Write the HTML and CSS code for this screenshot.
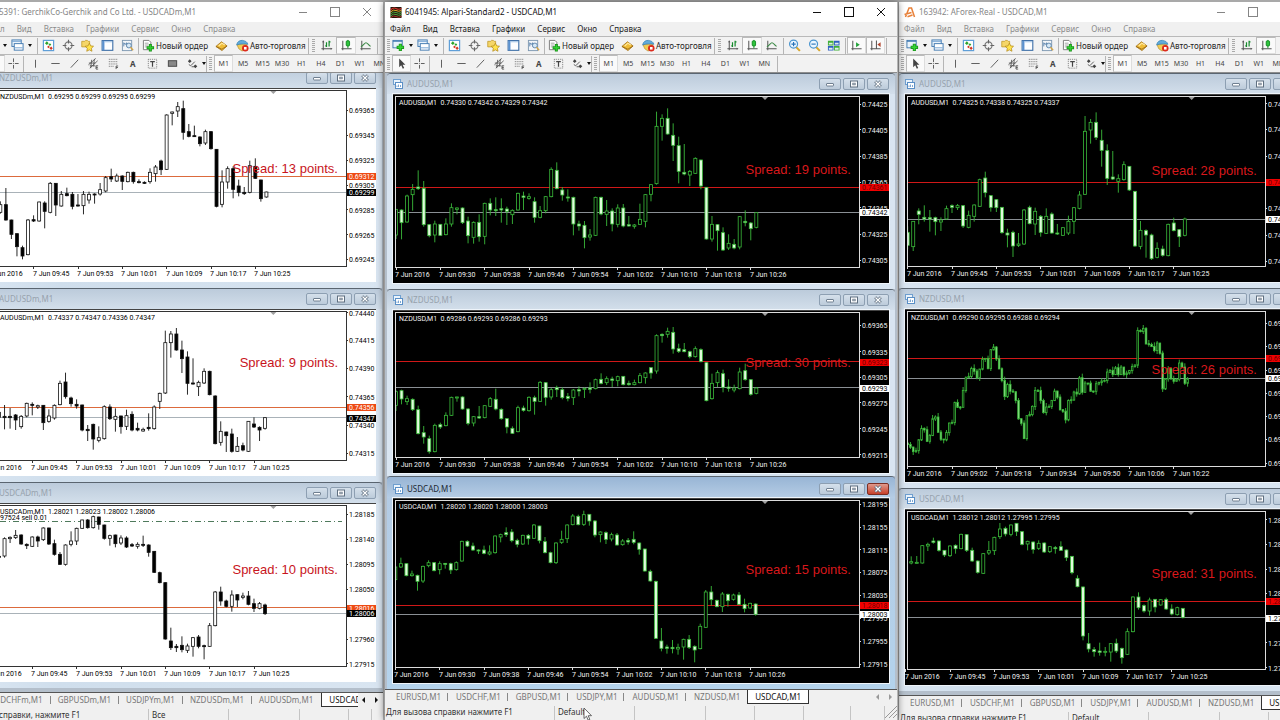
FILE: index.html
```html
<!DOCTYPE html>
<html lang="ru">
<head>
<meta charset="utf-8">
<title>Alpari-Standard2 - USDCAD,M1</title>
<link rel="stylesheet" href="styles.css">
</head>
<body>
<svg class="sprites" aria-hidden="true">
  <symbol id="i-newchart" viewBox="0 0 14 14"><rect x="1" y="1.5" width="10" height="8" fill="#eaf3fb" stroke="#3f78b0"/><path d="M1 2.5h10" stroke="#3f78b0"/><path d="M9 5v8M5 9h8" stroke="#1c9a1c" stroke-width="3.4"/><path d="M9 6v6M6 9h6" stroke="#35d435" stroke-width="1.6"/></symbol>
  <symbol id="i-profiles" viewBox="0 0 14 14"><rect x="1" y="1" width="10" height="7" fill="#eaf3fb" stroke="#3f78b0"/><rect x="3.5" y="5" width="9.500" height="7" fill="#fff" stroke="#3f78b0"/><path d="M1 2.500h10M3.500 9.500h9" stroke="#6fa0d0"/></symbol>
  <symbol id="i-market" viewBox="0 0 14 14"><rect x="1.500" y="1.500" width="11" height="11" fill="#fff" stroke="#5f9fd8" stroke-width="1.300"/><path d="M3.200 4.500l2-2 2 2-2 2zM7 6l1.500-1.500L10 6 8.500 7.500z" fill="#2da52d"/><path d="M5.500 8.500L7 7l1.500 1.500L7 10zM8 10l1.800-1.800L11.600 10l-1.800 1.800z" fill="#d43c28"/></symbol>
  <symbol id="i-cross" viewBox="0 0 14 14"><circle cx="7" cy="7" r="3.800" fill="none" stroke="#777" stroke-width="1.300"/><path d="M7 .800v4M7 9v4.200M.800 7h4M9 7h4.200" stroke="#666" stroke-width="1.200"/></symbol>
  <symbol id="i-favor" viewBox="0 0 14 14"><path d="M.800 2.500h3l1-1h2l1 1h1.500v6h-8.500z" fill="#f5d668" stroke="#bd9526" stroke-width=".800"/><path d="M9 4.500l1.400 2.900 3.100.400-2.300 2.200.600 3.200L9 11.700l-2.800 1.500.600-3.200-2.300-2.200 3.100-.400z" fill="#ffe34d" stroke="#b58a18" stroke-width=".800"/></symbol>
  <symbol id="i-panel" viewBox="0 0 14 14"><rect x="1.200" y="1.700" width="11.500" height="10.500" fill="#fdfeff" stroke="#3f70a8" stroke-width="1.200"/><path d="M2.600 2v10" stroke="#5b92d0" stroke-width="2.200"/><path d="M4 3h8" stroke="#9cc0e4"/></symbol>
  <symbol id="i-tester" viewBox="0 0 14 14"><rect x="1.500" y="1.500" width="10" height="11" fill="#f2f5f8" stroke="#7e98b2"/><path d="M3 8V4l1.500 2L6 4v4" fill="none" stroke="#5a83ad"/><circle cx="8.500" cy="7" r="2.600" fill="#d6e8f6" stroke="#5e86ac"/><path d="M10.300 9l2.700 3" stroke="#d2a446" stroke-width="1.600"/></symbol>
  <symbol id="i-order" viewBox="0 0 14 14"><path d="M1.500 1.500h6l2 2v8h-8z" fill="#fff" stroke="#777"/><path d="M3 4.500h4M3 6.500h4M3 8.500h3" stroke="#888" stroke-width=".800"/><path d="M9 5.500v8M5 9.500h8" stroke="#169016" stroke-width="3.200"/><path d="M9 6.300v6.400M5.800 9.500h6.400" stroke="#32cf32" stroke-width="1.600"/></symbol>
  <symbol id="i-gold" viewBox="0 0 14 14"><path d="M1 8l6-5 6 4.500-5.500 5z" fill="#f0bd38" stroke="#a8761a" stroke-width=".900"/><path d="M1 8l6.400 3L13 7.500" fill="none" stroke="#8d5e10" stroke-width=".800"/><path d="M4 7.500l3.500-3 3 2" stroke="#ffe9a0" stroke-width="1.200" fill="none"/></symbol>
  <symbol id="i-auto" viewBox="0 0 14 14"><path d="M1 6h11l-3 5.500L6.500 13 3 10.500z" fill="#f2cc54" stroke="#b1892b" stroke-width=".700"/><path d="M.700 6.500C1 3 4 1.200 7 1.500s5.500 2 5.800 4.200C9 4.500 5 5 .700 6.500z" fill="#62abd9" stroke="#2f7fb4" stroke-width=".700"/><circle cx="10" cy="10" r="3.500" fill="#dc2a1c"/><rect x="8.600" y="8.600" width="2.800" height="2.800" fill="#fff"/></symbol>
  <symbol id="i-bars" viewBox="0 0 14 14"><path d="M3.500 2v10M1.500 10.500h11" stroke="#555" stroke-width="1.100"/><path d="M2.300 3.500l1.200-2 1.200 2zM11.500 9.300l2 1.200-2 1.200z" fill="#555"/><path d="M7 3.500v5M5.700 7.500H7M9.800 2v6M9.800 3h1.500" stroke="#168a2c" stroke-width="1.300"/></symbol>
  <symbol id="i-candle" viewBox="0 0 14 14"><path d="M3 2v10M1.500 10.500h11" stroke="#555" stroke-width="1.100"/><path d="M8.500 1v9" stroke="#128a22"/><rect x="6.700" y="2" width="3.600" height="5.500" rx="1" fill="#2ec43c" stroke="#128a22"/></symbol>
  <symbol id="i-line" viewBox="0 0 14 14"><path d="M3 2v10M1.500 10.500h11" stroke="#555" stroke-width="1.100"/><path d="M2 8.500C5 7 6 4 7.500 4S10 6.500 12.500 8" fill="none" stroke="#3c8a46" stroke-width="1.100"/></symbol>
  <symbol id="i-zoomin" viewBox="0 0 14 14"><path d="M8.500 8.500l4.300 4.300" stroke="#d6a52c" stroke-width="2.200"/><circle cx="6" cy="5.500" r="4.300" fill="#eaf6ff" stroke="#4a94cf" stroke-width="1.300"/><path d="M6 3.200v4.600M3.700 5.500h4.600" stroke="#2671b8" stroke-width="1.200"/></symbol>
  <symbol id="i-zoomout" viewBox="0 0 14 14"><path d="M8.500 8.500l4.300 4.300" stroke="#d6a52c" stroke-width="2.200"/><circle cx="6" cy="5.500" r="4.300" fill="#eaf6ff" stroke="#4a94cf" stroke-width="1.300"/><path d="M3.700 5.500h4.600" stroke="#2671b8" stroke-width="1.200"/></symbol>
  <symbol id="i-tile" viewBox="0 0 14 14"><path d="M1 2h6v5H1zM7.500 7.500h6v5h-6z" fill="#3fae35"/><path d="M7.500 2h6v5h-6zM1 7.500h6v5H1z" fill="#2c5fc0"/><path d="M2 4h4v2H2zM8.500 4h4v2h-4zM2 9.500h4v2H2zM8.500 9.500h4v2h-4z" fill="#dfeee9"/></symbol>
  <symbol id="i-scroll" viewBox="0 0 14 14"><path d="M3 2v10M1.500 10.500h11" stroke="#555" stroke-width="1.100"/><path d="M6.500 3.500l4 2.700-4 2.700z" fill="#23a33a"/></symbol>
  <symbol id="i-shift" viewBox="0 0 14 14"><path d="M3 2v10M1.500 10.500h11M8 1.500v9" stroke="#555" stroke-width="1.100"/><path d="M12.500 3.500v5L9 6z" fill="#b2452e"/></symbol>
  <symbol id="i-pointer" viewBox="0 0 14 14"><path d="M4.500 1.500v9.500l2.200-2 1.700 3.600 1.500-.700-1.700-3.500h3z" fill="#444"/></symbol>
  <symbol id="i-plus" viewBox="0 0 14 14"><path d="M7 1.500v4M7 8.500v4M1.500 7h4M8.500 7h4M6.600 7h.800" stroke="#555"/></symbol>
  <symbol id="i-vline" viewBox="0 0 14 14"><path d="M7 3v8.500" stroke="#555"/></symbol>
  <symbol id="i-hline" viewBox="0 0 14 14"><path d="M2.500 7h9" stroke="#555"/></symbol>
  <symbol id="i-trend" viewBox="0 0 14 14"><path d="M3 11.500l8-8.500" stroke="#555"/></symbol>
  <symbol id="i-channel" viewBox="0 0 14 14"><path d="M1.500 8.500l8-7M3 12l8.500-8M2 6.500h7M3 9.500h6M5 3l-1 9M8 2L7 10" stroke="#555" stroke-width=".900"/><path d="M12 9.500h-2.300v3.500H12M9.700 11.200h2" fill="none" stroke="#444" stroke-width=".900"/></symbol>
  <symbol id="i-fibo" viewBox="0 0 14 14"><path d="M2 2.500h10M2 5h10M2 7.500h10M2 10h6" stroke="#666" stroke-dasharray="1 1"/><path d="M9.800 13V9.700H12M9.800 11.300h2" fill="none" stroke="#444" stroke-width=".900"/></symbol>
  <symbol id="i-label" viewBox="0 0 14 14"><rect x="2.500" y="2.500" width="9" height="9.500" fill="none" stroke="#777" stroke-dasharray="1 1"/><path d="M4.500 5h5M7 5v5.500" stroke="#444" stroke-width="1.300"/></symbol>
  <symbol id="i-rect" viewBox="0 0 14 14"><rect x="2.500" y="4" width="9" height="6" fill="#888" stroke="#444"/></symbol>
  <symbol id="i-arrows" viewBox="0 0 14 14"><path d="M2 4.500l2-2 2 2-2 2zM8 10l2-2 2.200 2L10 12z" fill="#444"/><path d="M3 8l2 1.500L9.500 5M6 10.500l2.500 0" fill="none" stroke="#555"/></symbol>
  <symbol id="i-doc" viewBox="0 0 10 10"><rect x=".500" y=".500" width="7" height="5" fill="#e9f3fc" stroke="#6f9fcf"/><rect x="2.500" y="3.500" width="7" height="6" fill="#fff" stroke="#5a8fc6"/><path d="M4 8V6.500M5.500 8V5.500M7.500 8V6" stroke="#5a8fc6" stroke-width=".800"/></symbol>
  <symbol id="i-min" viewBox="0 0 12 8"><rect x="2.500" y="3.500" width="7" height="2.500" rx=".500" fill="#fff" stroke="#6f7f90"/></symbol>
  <symbol id="i-max" viewBox="0 0 12 8"><rect x="2.500" y="1" width="7" height="6" fill="#fff" stroke="#5f6f80"/><rect x="4.800" y="3.200" width="2.400" height="1.600" fill="none" stroke="#5f6f80" stroke-width=".800"/></symbol>
  <symbol id="i-close" viewBox="0 0 12 8"><path d="M3.200 1.200l5.600 5.600M8.800 1.200L3.200 6.800" stroke="#5f6f80" stroke-width="2.800"/><path d="M3.500 1.500l5 5M8.500 1.500l-5 5" stroke="#fff" stroke-width="1.200"/></symbol>
</svg>

<template id="bars">
  <nav class="menu">
    <button>Файл</button><button>Вид</button><button>Вставка</button><button>Графики</button><button>Сервис</button><button>Окно</button><button>Справка</button>
  </nav>
  <div class="toolbar">
    <i class="grip"></i>
    <button class="drop" aria-label="Новый график"><svg class="ico"><use href="#i-newchart"/></svg></button>
    <button class="drop" aria-label="Профили"><svg class="ico"><use href="#i-profiles"/></svg></button>
    <i class="sep"></i>
    <div class="group group-views">
      <button aria-label="Обзор рынка"><svg class="ico"><use href="#i-market"/></svg></button>
      <button aria-label="Окно данных"><svg class="ico"><use href="#i-cross"/></svg></button>
      <button aria-label="Навигатор"><svg class="ico"><use href="#i-favor"/></svg></button>
      <button aria-label="Терминал"><svg class="ico"><use href="#i-panel"/></svg></button>
      <button aria-label="Тестер"><svg class="ico"><use href="#i-tester"/></svg></button>
    </div>
    <i class="sep"></i>
    <button class="wide"><svg class="ico"><use href="#i-order"/></svg>Новый ордер</button>
    <button class="gold" aria-label="Редактор"><svg class="ico"><use href="#i-gold"/></svg></button>
    <button class="wide"><svg class="ico"><use href="#i-auto"/></svg>Авто-торговля</button>
    <i class="sep"></i><i class="grip"></i>
    <div class="group group-kind">
      <button aria-label="Бары"><svg class="ico"><use href="#i-bars"/></svg></button>
      <button class="on" aria-label="Свечи"><svg class="ico"><use href="#i-candle"/></svg></button>
      <button aria-label="Линия"><svg class="ico"><use href="#i-line"/></svg></button>
    </div>
    <i class="sep"></i>
    <div class="group group-kind">
      <button aria-label="Увеличить"><svg class="ico"><use href="#i-zoomin"/></svg></button>
      <button aria-label="Уменьшить"><svg class="ico"><use href="#i-zoomout"/></svg></button>
      <button aria-label="Расположить"><svg class="ico"><use href="#i-tile"/></svg></button>
    </div>
    <i class="sep"></i>
    <button class="on scroll" aria-label="Автопрокрутка"><svg class="ico"><use href="#i-scroll"/></svg></button>
    <button class="on scroll" aria-label="Сдвиг графика"><svg class="ico"><use href="#i-shift"/></svg></button>
    <i class="sep"></i>
  </div>
  <div class="toolbar tools">
    <i class="grip"></i>
    <button class="on pointer" aria-label="Курсор"><svg class="ico"><use href="#i-pointer"/></svg></button>
    <button aria-label="Перекрестие"><svg class="ico"><use href="#i-plus"/></svg></button>
    <i class="sep"></i>
    <div class="group group-draw">
      <button aria-label="Вертикальная линия"><svg class="ico"><use href="#i-vline"/></svg></button>
      <button aria-label="Горизонтальная линия"><svg class="ico"><use href="#i-hline"/></svg></button>
      <button aria-label="Трендовая линия"><svg class="ico"><use href="#i-trend"/></svg></button>
      <button aria-label="Канал"><svg class="ico"><use href="#i-channel"/></svg></button>
      <button aria-label="Фибоначчи"><svg class="ico"><use href="#i-fibo"/></svg></button>
      <button class="letter">A</button>
      <button aria-label="Метка"><svg class="ico"><use href="#i-label"/></svg></button>
    </div>
    <button class="rect-tool" aria-label="Прямоугольник"><svg class="ico"><use href="#i-rect"/></svg></button>
    <button class="drop" aria-label="Стрелки"><svg class="ico"><use href="#i-arrows"/></svg></button>
    <i class="sep"></i><i class="grip"></i>
    <div class="group group-time">
      <button class="on">M1</button><button>M5</button><button>M15</button><button>M30</button><button>H1</button><button>H4</button><button>D1</button><button>W1</button><button>MN</button>
    </div>
    <i class="sep"></i>
  </div>
</template>

<template id="child-buttons">
  <button aria-label="Свернуть"><svg><use href="#i-min"/></svg></button>
  <button aria-label="Развернуть"><svg><use href="#i-max"/></svg></button>
  <button class="close" aria-label="Закрыть"><svg><use href="#i-close"/></svg></button>
</template>

<main class="desktop">
  <section class="app app-left">
    <header class="title"><span class="logo"></span><h1>5391: GerchikCo-Gerchik and Co Ltd. - USDCADm,M1</h1>
      <div class="winbtns"><button class="w-min" aria-label="Свернуть"></button><button class="w-max" aria-label="Развернуть"></button><button class="w-close" aria-label="Закрыть"></button></div></header>
    <div class="bars"></div>
    <div class="mdi">
      <article class="child h221 raised"><header><svg class="doc"><use href="#i-doc"/></svg><h2>NZDUSDm,M1</h2></header><div class="chart" data-chart="l1"></div></article>
      <article class="child h194"><header><svg class="doc"><use href="#i-doc"/></svg><h2>AUDUSDm,M1</h2></header><div class="chart" data-chart="l2"></div></article>
      <article class="child h206"><header><svg class="doc"><use href="#i-doc"/></svg><h2>USDCADm,M1</h2></header><div class="chart" data-chart="l3"></div></article>
    </div>
    <nav class="tabs"><div class="tablist"><button>USDCHFm,M1</button><button>GBPUSDm,M1</button><button>USDJPYm,M1</button><button>NZDUSDm,M1</button><button>AUDUSDm,M1</button><button class="sel">USDCADm,M1</button></div><span class="arrows dark"><b></b><b></b></span></nav>
    <footer class="status"><span class="help">справки, нажмите F1</span><span class="c80">Все</span><span class="c71"></span><span class="c49"></span><span class="c23"></span></footer>
  </section>

  <section class="app app-mid active">
    <header class="title"><svg class="logo" viewBox="0 0 11 11"><rect width="11" height="11" fill="#20150a"/><path d="M0 3q3-3 5.500-1.500T11 1.500" fill="none" stroke="#d8322a" stroke-width="1.200"/><path d="M0 5q3-3 5.500-1.500T11 3.500" fill="none" stroke="#e0b02c"/><path d="M0 7q3-3 5.500-1.500T11 5.500M0 9q3-3 5.500-1.500T11 7.500" fill="none" stroke="#4da53a"/><path d="M0 10.800q3-2.800 5.500-1.300T11 9.500" fill="none" stroke="#a8382a"/></svg><h1>6041945: Alpari-Standard2 - USDCAD,M1</h1>
      <div class="winbtns"><button class="w-min" aria-label="Свернуть"></button><button class="w-max" aria-label="Развернуть"></button><button class="w-close" aria-label="Закрыть"></button></div></header>
    <div class="bars"></div>
    <div class="mdi">
      <article class="child h215"><header><svg class="doc"><use href="#i-doc"/></svg><h2>AUDUSD,M1</h2></header><div class="chart dark" data-chart="m1"></div></article>
      <article class="child h189 under"><header><svg class="doc"><use href="#i-doc"/></svg><h2>NZDUSD,M1</h2></header><div class="chart dark" data-chart="m2"></div></article>
      <article class="child h212 current"><header><svg class="doc"><use href="#i-doc"/></svg><h2>USDCAD,M1</h2></header><div class="chart dark" data-chart="m3"></div></article>
    </div>
    <nav class="tabs"><div class="tablist"><button>EURUSD,M1</button><button>USDCHF,M1</button><button>GBPUSD,M1</button><button>USDJPY,M1</button><button>AUDUSD,M1</button><button>NZDUSD,M1</button><button class="sel">USDCAD,M1</button></div><span class="arrows"><b></b><b></b></span></nav>
    <footer class="status"><span class="help">Для вызова справки нажмите F1</span><span class="c80">Default</span><span class="c71"></span><span class="c49"></span><span class="c49"></span><span class="c47"></span><span class="c34"></span><svg class="sizer" viewBox="0 0 12 12"><path d="M0 12L12 0M4 12l8-8M8 12l4-4" stroke="#999"/></svg>
      <svg class="mouse" viewBox="0 0 9 14"><path d="M1 1v10.500l2.500-2.300 1.600 3.900 1.700-.700-1.600-3.700h3.300z" fill="#fff" stroke="#444" stroke-width=".800"/></svg></footer>
  </section>

  <section class="app app-right">
    <header class="title"><svg class="logo" viewBox="0 0 11 11"><path d="M1 10L4.500 1H7l3 9M0 7.500l7-2M3 9.800l5-1.800" fill="none" stroke="#e8813a" stroke-width="1.500"/></svg><h1>163942: AForex-Real - USDCAD,M1</h1>
      <div class="winbtns"><button class="w-min" aria-label="Свернуть"></button><button class="w-max" aria-label="Развернуть"></button><button class="w-close" aria-label="Закрыть"></button></div></header>
    <div class="bars"></div>
    <div class="mdi">
      <article class="child h215"><header><svg class="doc"><use href="#i-doc"/></svg><h2>AUDUSD,M1</h2></header><div class="chart dark" data-chart="r1"></div></article>
      <article class="child h200"><header><svg class="doc"><use href="#i-doc"/></svg><h2>NZDUSD,M1</h2></header><div class="chart dark" data-chart="r2"></div></article>
      <article class="child h203"><header><svg class="doc"><use href="#i-doc"/></svg><h2>USDCAD,M1</h2></header><div class="chart dark" data-chart="r3"></div></article>
    </div>
    <nav class="tabs"><div class="tablist"><button>EURUSD,M1</button><button>USDCHF,M1</button><button>GBPUSD,M1</button><button>USDJPY,M1</button><button>AUDUSD,M1</button><button>NZDUSD,M1</button><button class="sel">USDCAD,M1</button></div></nav>
    <footer class="status"><span class="help">Для вызова справки нажмите F1</span><span class="c80">Default</span><span class="c71"></span><span class="c49"></span></footer>
  </section>
</main>
<script src="charts.js"></script>
</body>
</html>
```
FILE: styles.css
```css
* { box-sizing: border-box; }
html, body { margin: 0; height: 100%; overflow: hidden; }
body { font-family: "Noto Sans", "Open Sans", sans-serif; font-size: 8px; line-height: 12px; color: #222; background: #a9a9a9; }
button { margin: 0; padding: 0; border: 0; background: none; font: inherit; color: inherit; display: flex; align-items: center; justify-content: center; white-space: nowrap; flex: none; }
h1, h2 { margin: 0; font-size: 8px; font-weight: 400; white-space: nowrap; }
.sprites { display: none; }

.desktop { display: flex; justify-content: center; height: 100vh; overflow: hidden; padding-top: 2px; }
.app { display: flex; flex-direction: column; background: #f0f0f0; overflow: hidden; border-left: 1px solid #9b9b9b; border-right: 1px solid #b4b4b4; }
.app-left { flex: 1 0 406px; height: calc(100vh + 1px); }
.app-mid { flex: 1 0 514px; height: calc(100vh - 2px); }
.app-right { flex: 1 0 404px; height: calc(100vh + 4px); }
.active { box-shadow: 0 0 7px rgba(0, 0, 0, .5); z-index: 1; }

.title { display: flex; align-items: center; height: 20px; flex: none; background: #fff; padding-left: 5px; color: #858585; }
.active .title { color: #111; }
.logo { width: 12px; height: 11px; margin-right: 3px; flex: none; }
.winbtns { display: flex; margin-left: auto; }
.winbtns button { width: 32px; height: 20px; }
.winbtns button::before { content: ""; width: 8px; height: 8px; }
.winbtns .w-min::before { height: 1px; background: currentColor; }
.winbtns .w-max::before { border: 1px solid currentColor; }
.winbtns .w-close::before { background: linear-gradient(45deg, transparent 46%, currentColor 46% 56%, transparent 56%), linear-gradient(-45deg, transparent 46%, currentColor 46% 56%, transparent 56%); }

.menu { display: flex; gap: 12px; height: 14px; padding-left: 5px; color: #8c8c8c; }
.active .menu { color: #1c1c1c; }
.toolbar { display: flex; align-items: center; height: 18px; border-top: 1px solid #b9b9b9; background: #f2f2f2; overflow: hidden; }
.tools { height: 19px; border-bottom: 1px solid #8d8d8d; font-size: 7px; color: #444; }
.toolbar > * { flex: none; }
.ico { width: 13px; height: 13px; display: block; flex: none; }
.grip { width: 3px; height: 14px; margin: 0 2px; background: repeating-linear-gradient(#aaa 0 1px, #f2f2f2 1px 2px); }
.sep { width: 1px; height: 16px; background: #b5b5b5; margin: 0 1px; }
.on { background: #fafafa; border: 1px solid #bbb; border-right-color: #ddd; border-bottom-color: #ddd; height: 17px; }
.drop { width: 25px; justify-content: flex-start; }
.drop::after { content: ""; border: 2px solid transparent; border-top: 3px solid #111; border-bottom: 0; margin-left: 4px; }
.group { display: grid; grid-auto-flow: column; grid-auto-columns: 1fr; align-items: center; }
.group-views { width: 98px; }
.group-kind { width: 59px; }
.wide { gap: 1px; padding: 0 1px 0 2px; }
.gold { width: 25px; }
.scroll { width: 19px; }
.pointer { width: 19px; margin-right: 2px; }
.tools .sep { margin: 0 2px 0 3px; }
.group-draw { width: 136px; }
.letter { font-weight: 700; font-size: 8px; }
.rect-tool { width: 21px; display: none; }
.app-left .rect-tool { display: flex; }
.tools .drop { width: 20px; margin-left: 3px; }
.tools .drop::after { margin-left: 3px; }
.tools .drop + .sep { margin: 0; }
.group-time { width: 175px; }

.mdi { flex: 1 1 0; min-height: 0; display: flex; flex-direction: column; overflow: hidden; background: #b4bfcb; }
.app-left .mdi { padding: 0 1px 4px 0; }
.app-right .mdi { padding-bottom: 4px; }
.app-mid .mdi { padding: 0 2px; }
.child { display: flex; flex-direction: column; min-height: 0; padding: 0 6px 6px; border-radius: 4px 4px 0 0; background: linear-gradient(90deg, #d9e5f1, #cfdeec 20%, #d9e5f1); border: 0 solid #5a6570; border-top-width: 1px; }
.child.h221 { flex: 221 1 0; }
.child.h215 { flex: 215 1 0; }
.child.h212 { flex: 212 1 0; }
.child.h206 { flex: 206 1 0; }
.child.h203 { flex: 203 1 0; }
.child.h200 { flex: 200 1 0; }
.child.h194 { flex: 194 1 0; }
.child.h189 { flex: 189 1 0; }
.child.raised { margin-top: -6px; }
.child.under { padding-bottom: 3px; }
.child.current { background: linear-gradient(#9bb8d8, #b3cbe4 20px, #b4d3ec); }
.child header { display: flex; align-items: center; height: 20px; flex: none; margin: 0 -6px; padding: 0 6px; color: #97a2ad; background: linear-gradient(#bccbdb, #d3dfeb); border-radius: 4px 4px 0 0; }
.child.current header { height: 21px; padding-top: 2px; color: #1d2833; background: linear-gradient(#98b5d5, #b6cde5); }
.doc { width: 10px; height: 10px; margin-right: 4px; }
.child header button { width: 22px; height: 12px; margin-left: 2px; border: 1px solid #8d9fb2; border-radius: 2px; background: linear-gradient(#d5e0eb, #bccbda); }
.child header button:first-of-type { margin-left: auto; }
.child header button svg { width: 12px; height: 8px; }
.child.current header .close { background: linear-gradient(#e09a8c, #c8402a); border-color: #7c2e22; }
.chart { flex: 1 1 0; min-height: 0; background: #fff; border-top: 1px solid #444; }
.chart.dark { background: #000; box-shadow: 0 0 0 1px #eef4fa; }
.chart svg { display: block; width: 100%; height: 100%; }
.chart text { font-family: Roboto, "Noto Sans", sans-serif; font-size: 7px; fill: #000; }
.chart.dark text { fill: #f2f2f2; }
.chart text.spread { font-family: "Liberation Sans", Arial, sans-serif; font-size: 13px; fill: #c8141c; }
.chart.dark text.spread { fill: #d8181c; }
.chart text.bid, .chart text.ask { fill: #fff; }
.chart.dark text.bid { fill: #000; }
.chart.dark text.ask { fill: #6d0000; }

.tabs { display: flex; height: 15px; flex: none; background: #f0f0f0; border-top: 1px solid #555; color: #777; }
.tablist { display: flex; flex: 1; min-width: 0; overflow: hidden; padding-left: 3px; }
.tablist button { padding: 0 7px 0 8px; height: 14px; position: relative; }
.tablist button:not(.sel):not(:nth-last-child(2))::after { content: ""; position: absolute; right: 0; top: 3px; width: 1px; height: 8px; background: #888; }
.tablist .sel { background: #fff; color: #111; border: 1px solid #333; border-top: 0; padding: 0 7px; }
.app-left .tablist { padding-left: 4px; }
.app-left .tablist button { padding: 0 8px 0 7px; }
.arrows { display: flex; align-items: center; gap: 10px; padding: 0 5px 0 4px; }
.arrows b { border: 3px solid transparent; border-right-color: #999; border-left: 0; }
.arrows b + b { border: 3px solid transparent; border-left-color: #999; border-right: 0; }
.arrows.dark b { border-right-color: #111; }
.arrows.dark b + b { border-color: transparent transparent transparent #111; }
.status { display: flex; position: relative; height: 16px; flex: none; padding-top: 2px; background: #f0f0f0; color: #333; overflow: hidden; }
.status span { border-right: 1px solid #c4c4c4; padding-left: 3px; white-space: nowrap; flex: none; }
.status .help { width: 170px; padding-left: 1px; }
.app-left .status .help { padding-left: 20px; }
.c80 { width: 80px; }
.c71 { width: 71px; }
.c49 { width: 49px; }
.c47 { width: 47px; }
.c34 { width: 34px; }
.c23 { width: 23px; }
.sizer { width: 12px; height: 12px; margin-left: auto; }
.mouse { position: absolute; left: 198px; top: 3px; width: 9px; height: 14px; }
```
FILE: charts.js
```js
// Candles: high, body top, body bottom, low in thirds of a pixel; "u" is a rising candle, "d" a falling one.
const STEP = 16.63;
const charts = {
  l1: { head: "NZDUSDm,M1  0.69295 0.69299 0.69295 0.69299", top: 61, x0: 40, tick: -33, mark: 859, ask: [319, "0.69312"], bid: [368, "0.69299"], spread: [311, "Spread: 13 points."],
    axis: "121 0.69365,196 0.69345,271 0.69325,346 0.69305,420 0.69285,495 0.69265,569 0.69245",
    times: "7 Jun 2016,7 Jun 09:45,7 Jun 09:53,7 Jun 10:01,7 Jun 10:09,7 Jun 10:17,7 Jun 10:25",
    data: "395 405 428 432 u,355 405 451 453 d,450 451 494 508 d,491 492 531 560 d,528 534 559 569 d,448 451 555 557 u,437 450 454 457 d,396 397 454 456 u,395 400 425 476 d,337 341 428 431 u,340 341 406 439 d,364 374 409 411 u,354 372 378 380 d,367 374 410 419 d,373 406 409 411 d,364 374 408 434 u,366 374 391 402 u,371 373 375 402 d,340 360 373 378 u,319 324 364 368 u,297 321 328 337 d,312 319 334 337 u,317 319 335 361 d,306 308 336 338 u,306 308 336 342 d,329 336 338 341 d,335 338 341 343 d,296 308 336 342 u,286 292 312 336 u,270 274 300 316 d,134 136 299 301 u,126 127 131 167 u,97 111 124 142 u,93 117 188 210 d,163 186 200 203 d,168 198 200 202 d,200 202 222 230 d,180 186 220 226 u,184 186 237 240 d,238 239 410 413 d,302 337 404 413 u,290 297 337 357 u,290 297 359 386 d,330 349 368 380 d,352 368 372 376 d,273 288 368 371 u,266 290 326 328 d,330 331 387 396 d,366 367 382 384 u" },
  l2: { head: "AUDUSDm,M1  0.74337 0.74347 0.74336 0.74347", top: 81, x0: 36, tick: -33, mark: 859, ask: [370, "0.74356"], bid: [401, "0.74347"], spread: [249, "Spread: 9 points."],
    axis: "86 0.74440,168 0.74415,253 0.74390,338 0.74365,423 0.74340,508 0.74315",
    times: "7 Jun 2016,7 Jun 09:45,7 Jun 09:53,7 Jun 10:01,7 Jun 10:09,7 Jun 10:17,7 Jun 10:25",
    data: "380 385 400 405 u,363 397 401 436 d,372 397 401 434 d,390 393 408 438 d,393 397 428 434 u,356 358 396 400 u,355 361 363 394 d,362 365 369 375 u,363 364 416 438 d,376 396 412 416 u,361 364 402 407 u,290 298 362 364 u,266 294 338 344 d,338 342 359 368 d,346 361 366 374 d,362 363 438 442 d,423 436 440 471 d,419 421 465 497 d,427 461 469 475 u,364 368 464 467 u,361 369 404 408 d,373 397 406 443 u,395 396 428 449 d,377 395 427 438 u,382 391 438 442 d,416 433 438 442 d,431 436 441 443 u,388 430 434 440 d,364 369 434 437 u,326 328 352 375 u,140 176 327 330 u,141 150 176 221 u,132 150 198 200 d,170 198 224 267 d,202 219 298 332 d,223 297 300 302 d,290 295 308 336 u,253 262 297 300 u,260 262 332 334 d,334 336 479 481 d,412 442 475 485 u,443 444 455 504 d,434 450 502 506 d,459 487 502 504 u,476 485 498 502 d,411 412 502 504 u,400 420 429 432 d,427 430 438 471 d,400 401 433 437 u" },
  l3: { head: "USDCADm,M1  1.28021 1.28023 1.28002 1.28006", top: 76, x0: 36, tick: -33, mark: 859, ask: [384, "1.28016"], bid: [401, "1.28006"], spread: [283, "Spread: 10 points."], trade: [124, "97524 sell 0.01"],
    axis: "104 1.28185,178 1.28140,253 1.28095,328 1.28050,478 1.27960,552 1.27915",
    times: "7 Jun 2016,7 Jun 09:45,7 Jun 09:53,7 Jun 10:01,7 Jun 10:09,7 Jun 10:17,7 Jun 10:25",
    data: "228 230 231 232 d,173 177 229 234 u,170 173 177 190 u,151 167 174 178 u,164 166 193 195 d,191 194 198 208 d,170 172 200 202 u,168 172 184 202 d,143 145 180 184 u,144 145 193 196 d,180 192 224 228 d,217 224 254 256 d,194 196 254 258 u,155 184 194 200 u,144 146 184 196 u,120 121 146 148 u,118 121 144 147 d,108 111 144 147 u,111 112 134 150 d,135 136 176 180 d,165 168 176 198 u,165 166 192 203 d,167 175 190 196 u,170 175 202 205 d,190 195 199 202 d,188 194 200 207 u,168 194 197 202 d,194 196 218 231 d,214 215 278 280 d,276 279 309 311 d,308 309 478 480 d,444 484 504 511 d,493 500 504 517 d,470 497 510 518 d,492 499 512 520 u,472 474 500 531 u,466 472 500 506 d,495 498 501 539 d,430 438 500 502 u,334 337 438 440 u,321 337 364 378 d,360 364 380 383 d,332 346 380 396 u,344 345 361 382 d,339 349 353 359 u,334 349 374 377 d,357 372 386 397 d,367 372 386 389 u,372 376 402 406 d" },
  m1: { head: "AUDUSD,M1  0.74330 0.74342 0.74329 0.74342", top: 18, x0: 3, tick: 0, mark: 1110, ask: [292, "0.74361"], bid: [367, "0.74342"], spread: [252, "Spread: 19 points."],
    axis: "42 0.74425,119 0.74405,198 0.74385,276 0.74365,353 0.74345,433 0.74325,510 0.74305",
    times: "7 Jun 2016,7 Jun 09:30,7 Jun 09:38,7 Jun 09:46,7 Jun 09:54,7 Jun 10:02,7 Jun 10:10,7 Jun 10:18,7 Jun 10:26",
    data: "358 358 435 447 u,358 360 398 448 d,314 318 396 398 u,282 298 314 362 u,241 291 296 300 d,273 295 404 410 d,402 404 437 442 d,392 402 435 457 u,402 403 436 438 d,385 402 434 436 u,340 353 402 410 u,352 354 358 373 u,352 354 398 402 d,380 393 437 460 d,394 397 442 461 u,373 397 440 455 d,338 340 439 463 u,325 340 360 376 d,322 359 362 378 d,325 356 360 398 d,350 357 364 405 d,358 361 374 402 u,308 310 360 362 u,305 318 322 360 d,310 320 325 329 u,322 335 382 398 d,348 362 382 385 u,318 320 362 370 u,232 238 320 322 u,217 241 296 298 d,291 300 315 332 d,298 321 324 335 d,320 322 402 436 d,392 402 408 422 d,393 406 443 475 d,417 435 441 452 u,320 322 436 438 u,320 322 372 376 d,330 363 373 408 u,355 363 402 424 d,343 354 403 412 u,342 354 408 412 d,378 404 408 410 d,402 405 409 416 u,341 388 403 405 u,312 314 394 412 u,282 284 313 334 u,65 109 281 284 u,73 85 109 152 u,55 85 132 134 d,100 136 166 213 d,140 167 244 280 d,162 247 252 256 d,240 244 255 288 u,202 205 250 252 u,209 210 288 298 d,291 292 447 449 d,378 403 447 455 u,402 404 422 482 d,412 428 480 483 d,433 460 474 480 u,447 463 474 478 d,378 380 471 478 u,361 394 398 409 d,396 399 416 451 d,367 368 412 415 u" },
  m2: { head: "NZDUSD,M1  0.69286 0.69293 0.69286 0.69293", top: 65, x0: 3, tick: 0, mark: 1110, ask: [214, "0.69323"], bid: [292, "0.69293"], spread: [229, "Spread: 30 points."],
    axis: "105 0.69365,184 0.69335,260 0.69305,337 0.69275,415 0.69245,493 0.69215",
    times: "7 Jun 2016,7 Jun 09:30,7 Jun 09:38,7 Jun 09:46,7 Jun 09:54,7 Jun 10:02,7 Jun 10:10,7 Jun 10:18,7 Jun 10:26",
    data: "300 304 345 362 u,298 301 326 342 d,316 325 334 344 u,324 327 358 362 d,346 358 430 432 d,407 427 440 460 d,436 445 484 490 d,400 405 484 486 u,397 403 410 416 d,366 375 406 408 u,319 321 375 377 u,319 320 322 334 u,318 320 356 358 d,353 356 399 405 d,377 379 398 408 u,347 379 383 386 d,345 346 382 384 u,320 325 348 350 u,295 327 356 360 d,354 357 385 388 d,383 385 410 429 d,408 414 429 431 d,346 352 424 426 u,346 353 360 364 d,318 321 361 364 u,316 322 333 373 d,272 276 333 335 u,275 277 321 346 d,293 298 320 328 u,286 292 298 320 d,291 298 322 327 d,308 318 324 333 d,296 299 322 344 u,288 298 302 318 d,291 294 297 323 u,276 293 297 309 d,265 268 295 297 u,249 267 279 282 d,258 265 277 284 u,259 266 270 290 d,256 259 271 288 u,257 258 283 285 d,271 279 283 286 d,268 277 283 285 u,248 256 277 279 u,246 248 262 280 u,230 232 248 265 d,132 136 242 250 u,129 132 136 157 d,112 123 132 142 u,110 126 176 190 d,160 175 183 188 d,158 178 184 186 d,181 184 199 204 d,168 175 199 202 u,174 178 214 216 d,215 217 331 333 d,250 279 325 328 u,240 247 277 290 u,238 250 291 306 d,267 290 294 304 d,283 293 299 306 u,232 245 295 297 u,220 241 268 271 d,266 268 312 316 d,290 293 309 312 u" },
  m3: { head: "USDCAD,M1  1.28020 1.28020 1.28000 1.28003", top: 76, x0: 1, tick: 0, mark: 1110, ask: [391, "1.28018"], bid: [418, "1.28003"], spread: [299, "Spread: 15 points."],
    axis: "89 1.28195,157 1.28155,225 1.28115,292 1.28075,361 1.28035,430 1.27995,499 1.27955,568 1.27915",
    times: "7 Jun 2016,7 Jun 09:30,7 Jun 09:38,7 Jun 09:46,7 Jun 09:54,7 Jun 10:02,7 Jun 10:10,7 Jun 10:18,7 Jun 10:26",
    data: "264 277 315 327 u,249 267 277 280 u,266 267 303 305 d,288 298 303 306 u,300 302 320 348 d,273 275 319 325 u,257 264 273 278 u,262 264 288 290 d,260 267 285 299 u,265 266 268 282 d,264 267 286 298 d,260 264 285 288 u,198 200 259 261 u,197 200 214 217 d,204 214 226 229 d,224 226 229 238 d,213 226 236 239 d,212 232 238 242 u,182 184 234 237 u,177 180 187 203 u,158 174 180 187 d,163 172 198 203 d,192 197 209 218 d,180 182 208 211 u,178 182 192 210 d,148 151 191 193 u,153 154 198 206 d,187 201 234 236 d,231 234 264 266 d,203 205 264 268 u,168 194 203 208 u,149 151 192 205 u,118 124 150 152 u,120 125 150 152 d,108 120 149 154 u,118 119 139 153 d,136 139 181 188 d,170 172 180 203 u,170 174 194 208 d,174 180 193 200 u,175 181 211 213 d,193 199 210 213 u,190 197 202 210 d,170 194 203 209 d,203 205 224 240 d,222 223 289 291 d,285 290 319 321 d,318 320 491 493 d,460 499 521 530 d,510 517 521 537 d,496 518 522 536 d,507 518 523 540 u,492 494 517 555 u,481 494 518 523 d,512 515 526 563 d,447 455 522 524 u,346 352 458 460 u,334 352 375 393 d,375 377 396 398 d,352 358 396 412 u,357 359 378 396 d,357 361 374 378 u,352 361 389 391 d,372 389 402 413 d,384 386 400 402 u,386 388 419 423 d" },
  r1: { head: "AUDUSD,M1  0.74325 0.74338 0.74325 0.74337", top: 63, x0: 2, tick: 0, mark: 854, ask: [322, "0.74365"], bid: [432, "0.74337"], spread: [301, "Spread: 28 points."],
    axis: "86 0.74425,163 0.74405,243 0.74385,400 0.74345,480 0.74325,558 0.74305",
    times: "7 Jun 2016,7 Jun 09:45,7 Jun 09:53,7 Jun 10:01,7 Jun 10:09,7 Jun 10:17,7 Jun 10:25",
    data: "454 472 511 523 d,438 439 515 528 u,400 408 418 448 d,391 427 432 440 d,405 428 432 470 d,425 428 440 481 d,427 435 441 468 u,392 401 432 434 u,388 392 397 414 d,387 392 398 405 u,391 392 453 459 d,407 421 457 460 u,388 390 424 440 u,311 314 394 396 u,290 309 353 367 d,360 362 397 410 d,372 374 398 411 d,396 397 473 476 d,461 474 480 517 d,467 472 513 546 d,474 507 511 516 u,402 405 507 510 u,392 397 446 448 d,398 409 447 480 u,420 424 472 485 d,400 424 475 477 u,412 417 474 476 d,447 474 476 480 d,457 458 481 483 u,422 439 474 480 u,396 398 439 477 u,348 360 400 403 u,123 169 358 360 u,132 142 165 206 u,112 142 187 195 d,164 196 226 275 d,208 227 310 330 d,228 306 312 315 d,298 311 319 353 u,259 269 314 317 u,273 274 345 348 d,348 349 513 516 d,438 466 514 523 u,463 467 480 548 d,476 480 551 555 d,502 520 547 550 u,512 522 541 545 d,446 448 542 544 u,428 444 467 469 d,462 464 485 516 d,428 432 481 484 u" },
  r2: { head: "NZDUSD,M1  0.69290 0.69295 0.69288 0.69294", top: 82, x0: 2, tick: 0, mark: 854, ask: [223, "0.69320"], bid: [283, "0.69294"], spread: [272, "Spread: 26 points."],
    axis: "118 0.69365,188 0.69335,260 0.69305,328 0.69275,398 0.69245,467 0.69215,538 0.69185",
    times: "7 Jun 2016,7 Jun 09:02,7 Jun 09:18,7 Jun 09:34,7 Jun 09:50,7 Jun 10:06,7 Jun 10:22",
    closes: [482, 490, 503, 500, 468, 434, 438, 472, 455, 405, 400, 445, 466, 468, 446, 418, 416, 356, 370, 370, 320, 282, 278, 254, 262, 282, 256, 226, 224, 254, 198, 190, 225, 255, 290, 338, 302, 322, 324, 350, 405, 418, 464, 396, 392, 368, 320, 320, 350, 386, 370, 368, 350, 322, 340, 378, 382, 408, 350, 348, 325, 330, 282, 325, 298, 298, 322, 322, 300, 296, 292, 290, 265, 260, 272, 252, 272, 250, 272, 268, 260, 248, 244, 140, 143, 134, 180, 182, 188, 200, 178, 208, 315, 285, 255, 285, 292, 286, 238, 250, 298, 285] },
  r3: { head: "USDCAD,M1  1.28012 1.28012 1.27995 1.27995", top: 680, x0: -4, tick: 0, mark: 852, ask: [950, "1.28026"], bid: [1000, "1.27995"], spread: [880, "Spread: 31 points."],
    axis: "706 1.28185,780 1.28140,854 1.28095,927 1.28050,1075 1.27960,1150 1.27915",
    times: "7 Jun 2016,7 Jun 09:45,7 Jun 09:53,7 Jun 10:01,7 Jun 10:09,7 Jun 10:17,7 Jun 10:25",
    data: "817 828 836 838 d,816 832 836 840 u,815 834 836 838 u,782 784 836 838 u,775 780 785 800 u,760 770 774 778 d,768 770 798 802 d,797 798 812 818 d,783 785 814 818 u,780 783 793 808 d,748 750 793 795 u,749 751 798 803 d,790 798 830 833 d,828 830 864 868 d,806 808 867 869 u,770 799 806 812 u,757 759 799 812 u,716 734 757 764 u,727 732 749 756 d,720 722 750 756 u,716 717 742 755 d,741 742 780 783 d,769 771 779 798 u,771 773 795 808 d,768 777 792 797 u,774 776 803 806 d,785 787 802 806 u,785 790 793 808 d,771 787 798 800 d,795 797 820 830 d,815 816 865 870 d,873 882 907 909 d,906 908 1055 1068 d,1046 1078 1094 1104 d,1088 1096 1102 1117 d,1075 1100 1104 1114 d,1088 1101 1104 1116 u,1076 1078 1103 1132 u,1063 1077 1100 1106 d,1090 1092 1120 1138 d,1032 1042 1110 1112 u,936 938 1042 1044 u,924 938 970 976 d,960 964 980 985 d,940 947 980 994 u,944 945 968 984 d,944 946 962 964 u,940 946 974 977 d,960 974 989 993 d,967 970 991 994 u,971 972 1000 1002 d" }
};

const PAD = 2, PAD_TOP = 1, AXIS = 30, FOOT = 16;

function candlesOf(c) {
  if (c.data) return c.data.split(",").map(s => s.split(" "));
  let prev = c.closes[0] - 4;
  return c.closes.map((v, i) => {
    const a = Math.min(prev, v), b = Math.max(prev, v) + 1;
    const row = [a - (i * 7) % 13, a, b, b + (i * 5) % 11, v < prev ? "u" : "d"];
    prev = v;
    return row;
  });
}

function draw(el) {
  const c = charts[el.dataset.chart], dark = el.classList.contains("dark");
  const W = el.clientWidth, H = el.clientHeight;
  const right = W - AXIS, bottom = H - FOOT;
  const Y = v => (v - c.top) / 3 + PAD_TOP, X = v => v / 3 + PAD;
  const R = v => Math.floor(v) + 0.5;
  const ink = dark ? "#dcdcdc" : "#333", line = dark ? "#3aba3a" : "#111", down = dark ? "#e0fbdc" : "#000", up = dark ? "#000" : "#fff";
  const askInk = dark ? "#d01818" : "#dc6a3c", askTag = dark ? "#f00000" : "#ee4a14";
  const dense = !!c.closes, step = dense ? STEP / 2 : STEP, half = dense ? 1.2 : 1.9;
  let s = "";
  s += `<path d="M${PAD} ${R(Y(c.bid[0]))}H${right}" stroke="${dark ? "#8a8f94" : "#a9b2b8"}"/>`;
  s += `<path d="M${PAD} ${R(Y(c.ask[0]))}H${right}" stroke="${askInk}"/>`;
  if (c.trade) {
    s += `<path d="M${PAD} ${R(Y(c.trade[0]))}H${right - 4}" stroke="#4f7a5c" stroke-dasharray="6 3 1 3"/>`;
    s += `<text x="${X(39)}" y="${Math.round(Y(c.trade[0])) - 1}">${c.trade[1]}</text>`;
  }
  s += `<svg x="${PAD}" y="0" width="${right - PAD}" height="${bottom}"><g transform="translate(${-PAD} 0)">`;
  candlesOf(c).forEach((k, i) => {
    const x = X(c.x0 + i * step), [h, t, b, l] = k.slice(0, 4).map(v => Y(+v)), bear = k[4] === "d";
    s += `<path d="M${x} ${h}V${l}" stroke="${line}" stroke-width="0.9"/>`;
    const bh = Math.max(b - t, 1);
    s += `<rect x="${x - half + .4}" y="${t}" width="${half * 2 - .8}" height="${bh}" fill="${bear ? (dense ? "#8fe08a" : down) : up}" stroke="${line}" stroke-width="0.8"/>`;
  });
  s += `</g></svg>`;
  s += `<rect x="${PAD + .5}" y="${PAD_TOP + .5}" width="${right - PAD}" height="${bottom - PAD_TOP}" fill="none" stroke="${ink}"/>`;
  s += `<path d="M${X(c.mark) - 3} ${PAD_TOP + 1}h6l-3 3z" fill="#a0a0a0"/>`;
  c.times.split(",").forEach((t, i) => {
    const x = X(c.x0 + c.tick + i * STEP * 8);
    s += `<path d="M${R(x)} ${bottom}v3" stroke="${ink}"/><text x="${Math.round(x) - 1}" y="${bottom + 10}">${t}</text>`;
  });
  c.axis.split(",").forEach(a => {
    const [v, t] = a.split(" "), y = Y(+v);
    s += `<path d="M${right} ${R(y)}h2" stroke="${ink}"/><text x="${right + 3}" y="${Math.round(y) + 3}">${t}</text>`;
  });
  [["ask", askTag], ["bid", dark ? "#fff" : "#000"]].forEach(([n, fill]) => {
    const y = Math.round(Y(c[n][0]));
    s += `<rect x="${right + 1}" y="${y - 3}" width="${AXIS - 1}" height="7" fill="${fill}"/><text class="${n}" x="${right + 3}" y="${y + 3}">${c[n][1]}</text>`;
  });
  const start = el.closest(".app-left") ? X(39) : PAD + 4;
  const name = c.head.split("  ");
  s += `<text x="${start}" y="10">${name[0]}\u00a0 ${name[1]}</text>`;
  s += `<text class="spread" x="${right - 8}" y="${Math.round(Y(c.spread[0]))}" text-anchor="end">${c.spread[1]}</text>`;
  el.innerHTML = `<svg>${s}</svg>`;
}

document.querySelectorAll(".bars").forEach(b => b.replaceWith(document.getElementById("bars").content.cloneNode(true)));
document.querySelectorAll(".child header").forEach(h => h.append(document.getElementById("child-buttons").content.cloneNode(true)));
const drawAll = () => document.querySelectorAll(".chart").forEach(draw);
drawAll();
window.addEventListener("resize", drawAll);
```
